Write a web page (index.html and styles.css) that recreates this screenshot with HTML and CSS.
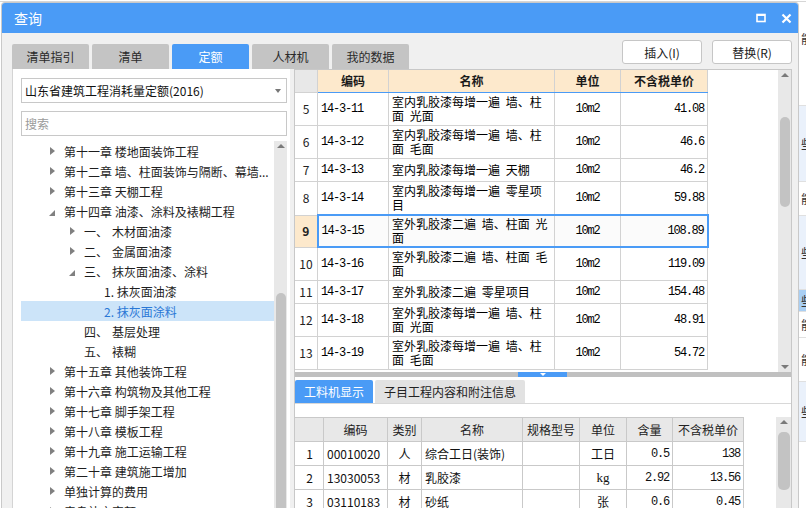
FILE: index.html
```html
<!DOCTYPE html>
<html lang="zh-CN">
<head>
<meta charset="utf-8">
<title>查询</title>
<link rel="stylesheet" href="styles.css">
</head>
<body>
<div class="desk">
  <div class="desk-strip">
    <div class="band b1">能</div>
    <div class="band b2">些</div>
    <div class="band b3">能</div>
    <div class="band b4">些</div>
    <div class="band b5">些</div>
    <div class="band b6">能</div>
    <div class="band b7">能</div>
    <div class="band b8">些</div>
  </div>
</div>

<div class="dialog">
  <div class="titlebar">
    <span class="title">查询</span>
    <div class="winbtns">
      <svg width="10" height="10" viewBox="0 0 10 10"><rect x="1" y="1.5" width="8" height="7" fill="none" stroke="#fff" stroke-width="1.6"/><rect x="1" y="1" width="8" height="2" fill="#fff"/></svg>
      <svg width="11" height="11" viewBox="0 0 11 11"><path d="M1.5 1.5 L9.5 9.5 M9.5 1.5 L1.5 9.5" stroke="#fff" stroke-width="2.2"/></svg>
    </div>
  </div>

  <div class="toolbar">
    <div class="tabs">
      <div class="tab">清单指引</div>
      <div class="tab">清单</div>
      <div class="tab active">定额</div>
      <div class="tab">人材机</div>
      <div class="tab">我的数据</div>
    </div>
    <div class="actions">
      <div class="btn">插入(I)</div>
      <div class="btn">替换(R)</div>
    </div>
  </div>

  <div class="body">
    <div class="left">
      <div class="select"><span>山东省建筑工程消耗量定额(2016)</span><i class="caret"></i></div>
      <div class="search">搜索</div>
      <div class="tree">
        <div class="tree-list">
          <div class="node l0"><i class="arr"><b class="tri-c"></b></i>第十一章 楼地面装饰工程</div>
          <div class="node l0"><i class="arr"><b class="tri-c"></b></i>第十二章 墙、柱面装饰与隔断、幕墙...</div>
          <div class="node l0"><i class="arr"><b class="tri-c"></b></i>第十三章 天棚工程</div>
          <div class="node l0"><i class="arr"><b class="tri-e"></b></i>第十四章 油漆、涂料及裱糊工程</div>
          <div class="node l1"><i class="arr"><b class="tri-c"></b></i><span class="no">一、</span>木材面油漆</div>
          <div class="node l1"><i class="arr"><b class="tri-c"></b></i><span class="no">二、</span>金属面油漆</div>
          <div class="node l1"><i class="arr"><b class="tri-e"></b></i><span class="no">三、</span>抹灰面油漆、涂料</div>
          <div class="node l2"><i class="arr"></i>1. 抹灰面油漆</div>
          <div class="node l2 sel"><i class="arr"></i>2. 抹灰面涂料</div>
          <div class="node l1"><i class="arr"></i><span class="no">四、</span>基层处理</div>
          <div class="node l1"><i class="arr"></i><span class="no">五、</span>裱糊</div>
          <div class="node l0"><i class="arr"><b class="tri-c"></b></i>第十五章 其他装饰工程</div>
          <div class="node l0"><i class="arr"><b class="tri-c"></b></i>第十六章 构筑物及其他工程</div>
          <div class="node l0"><i class="arr"><b class="tri-c"></b></i>第十七章 脚手架工程</div>
          <div class="node l0"><i class="arr"><b class="tri-c"></b></i>第十八章 模板工程</div>
          <div class="node l0"><i class="arr"><b class="tri-c"></b></i>第十九章 施工运输工程</div>
          <div class="node l0"><i class="arr"><b class="tri-c"></b></i>第二十章 建筑施工增加</div>
          <div class="node l0"><i class="arr"><b class="tri-c"></b></i>单独计算的费用</div>
          <div class="node l0"><i class="arr"><b class="tri-c"></b></i>青岛补充定额</div>
        </div>
        <div class="tree-scroll">
          <i class="up"></i>
          <div class="thumb tthumb"></div>
        </div>
      </div>
    </div>

    <div class="right">
      <div class="upper">
        <div class="table-area">
          <table class="grid">
            <colgroup><col class="c1"><col class="c2"><col class="c3"><col class="c4"><col class="c5"></colgroup>
            <thead>
              <tr><th class="corner"></th><th>编码</th><th>名称</th><th>单位</th><th>不含税单价</th></tr>
            </thead>
            <tbody>
              <tr><td class="rh">5</td><td class="mono">14-3-11</td><td class="nm">室内乳胶漆每增一遍 墙、柱面 光面</td><td class="mono c">10m2</td><td class="mono r">41.08</td></tr>
              <tr><td class="rh">6</td><td class="mono">14-3-12</td><td class="nm">室内乳胶漆每增一遍 墙、柱面 毛面</td><td class="mono c">10m2</td><td class="mono r">46.6</td></tr>
              <tr class="one"><td class="rh">7</td><td class="mono">14-3-13</td><td class="nm">室内乳胶漆每增一遍 天棚</td><td class="mono c">10m2</td><td class="mono r">46.2</td></tr>
              <tr><td class="rh">8</td><td class="mono">14-3-14</td><td class="nm">室内乳胶漆每增一遍 零星项目</td><td class="mono c">10m2</td><td class="mono r">59.88</td></tr>
              <tr class="sel"><td class="rh">9</td><td class="mono first">14-3-15</td><td class="nm">室外乳胶漆二遍 墙、柱面 光面</td><td class="mono c">10m2</td><td class="mono r last">108.89</td></tr>
              <tr><td class="rh">10</td><td class="mono">14-3-16</td><td class="nm">室外乳胶漆二遍 墙、柱面 毛面</td><td class="mono c">10m2</td><td class="mono r">119.09</td></tr>
              <tr class="one"><td class="rh">11</td><td class="mono">14-3-17</td><td class="nm">室外乳胶漆二遍 零星项目</td><td class="mono c">10m2</td><td class="mono r">154.48</td></tr>
              <tr><td class="rh">12</td><td class="mono">14-3-18</td><td class="nm">室外乳胶漆每增一遍 墙、柱面 光面</td><td class="mono c">10m2</td><td class="mono r">48.91</td></tr>
              <tr><td class="rh">13</td><td class="mono">14-3-19</td><td class="nm">室外乳胶漆每增一遍 墙、柱面 毛面</td><td class="mono c">10m2</td><td class="mono r">54.72</td></tr>
            </tbody>
          </table>
        </div>
        <div class="vscroll">
          <i class="up"></i>
          <div class="thumb uthumb"></div>
          <i class="down"></i>
        </div>
      </div>

      <div class="splitter"><span class="handle"><i class="hdown"></i></span></div>

      <div class="lower">
        <div class="ltabs">
          <div class="ltab active">工料机显示</div>
          <div class="ltab wide">子目工程内容和附注信息</div>
        </div>
        <div class="lower-body">
          <div class="ltable-area">
            <table class="lgrid">
              <colgroup><col class="d1"><col class="d2"><col class="d3"><col class="d4"><col class="d5"><col class="d6"><col class="d7"><col class="d8"></colgroup>
              <thead>
                <tr><th></th><th>编码</th><th>类别</th><th>名称</th><th>规格型号</th><th>单位</th><th>含量</th><th>不含税单价</th></tr>
              </thead>
              <tbody>
                <tr><td class="c">1</td><td>00010020</td><td class="c">人</td><td>综合工日(装饰)</td><td></td><td class="c">工日</td><td class="mono r">0.5</td><td class="mono r">138</td></tr>
                <tr><td class="c">2</td><td>13030053</td><td class="c">材</td><td>乳胶漆</td><td></td><td class="c serif">kg</td><td class="mono r">2.92</td><td class="mono r">13.56</td></tr>
                <tr><td class="c">3</td><td>03110183</td><td class="c">材</td><td>砂纸</td><td></td><td class="c">张</td><td class="mono r">0.6</td><td class="mono r">0.45</td></tr>
              </tbody>
            </table>
          </div>
          <div class="lscroll">
            <i class="up"></i>
            <div class="thumb lthumb"></div>
          </div>
        </div>
      </div>
    </div>
  </div>
</div>
</body>
</html>
```

FILE: styles.css
```css
* { box-sizing: border-box; }

html, body {
  margin: 0;
  padding: 0;
}

body {
  width: 806px;
  height: 508px;
  overflow: hidden;
  position: relative;
  background: #ffffff;
  font-family: "Noto Sans CJK SC", "Noto Sans", sans-serif;
  font-size: 12px;
  color: #222;
}

/* background application behind the dialog */
.desk {
  position: absolute;
  inset: 0;
  background:
    linear-gradient(#d6d6d6, #d6d6d6) 0 1px / 806px 1px no-repeat,
    #fff;
}

.desk-strip {
  position: absolute;
  left: 798px;
  top: 0;
  width: 8px;
  height: 508px;
  display: flex;
  flex-direction: column;
  font-size: 12px;
  color: #333;
  overflow: hidden;
}

.band {
  display: flex;
  align-items: center;
  padding-left: 3px;
  border-bottom: 1px solid #e0e0e0;
  white-space: nowrap;
}
.b1 { height: 106px; padding-top: 30px; align-items: flex-start; }
.b2 { height: 76px; background: #eaf1fb; }
.b3 { height: 34px; }
.b4 { height: 74px; background: #eaf1fb; }
.b5 { height: 22px; background: #a9cff4; }
.b6 { height: 26px; }
.b7 { height: 44px; }
.b8 { height: 60px; background: #eaf1fb; }

/* dialog window */
.dialog {
  position: absolute;
  left: 2px;
  top: 3px;
  width: 796px;
  height: 520px;
  background: #f0f0f0;
  border-radius: 3px 3px 0 0;
  box-shadow: 0 0 0 1px #c9c9c9;
  display: flex;
  flex-direction: column;
}

.titlebar {
  height: 30px;
  flex: none;
  background: #4a9bf6;
  border-radius: 3px 3px 0 0;
  display: flex;
  align-items: center;
  padding: 0 6px 0 12px;
  color: #fff;
  font-size: 14px;
}

.title { flex: 1; }

.winbtns {
  display: flex;
  align-items: center;
  gap: 15px;
}

.toolbar {
  height: 36px;
  flex: none;
  display: flex;
  justify-content: space-between;
  padding: 0 6px 0 10px;
}

.tabs {
  display: flex;
  gap: 3px;
  align-self: flex-end;
}

.tab {
  width: 77px;
  height: 25px;
  background: #c4c4c4;
  color: #2a2a2a;
  display: flex;
  align-items: center;
  justify-content: center;
  border-radius: 2px 2px 0 0;
}

.tab.active {
  background: #4a9bf6;
  color: #fff;
}

.actions {
  display: flex;
  gap: 10px;
  margin-top: 7px;
  align-self: flex-start;
}

.btn {
  width: 80px;
  height: 24px;
  background: #fff;
  border: 1px solid #c6c6c6;
  border-radius: 3px;
  display: flex;
  align-items: center;
  justify-content: center;
  color: #222;
}

.body {
  flex: 1;
  min-height: 0;
  display: flex;
  gap: 4px;
  padding: 0 6px 0 10px;
}

/* left panel */
.left {
  width: 278px;
  flex: none;
  background: #fff;
  border-left: 1px solid #d4d4d4;
  padding: 9px 3px 0 8px;
  display: flex;
  flex-direction: column;
}

.select {
  height: 25px;
  flex: none;
  border: 1px solid #c8c8c8;
  display: flex;
  align-items: center;
  justify-content: space-between;
  padding: 0 5px 0 3px;
  color: #111;
}

.caret {
  width: 0;
  height: 0;
  border-left: 3px solid transparent;
  border-right: 3px solid transparent;
  border-top: 4px solid #777;
}

.search {
  height: 25px;
  flex: none;
  margin-top: 8px;
  border: 1px solid #c8c8c8;
  display: flex;
  align-items: center;
  padding-left: 3px;
  color: #9a9a9a;
}

.tree {
  flex: 1;
  min-height: 0;
  display: flex;
  margin-top: 5px;
}

.tree-list {
  flex: 1;
  overflow: hidden;
}

.node {
  height: 20px;
  display: flex;
  align-items: center;
  white-space: nowrap;
  color: #1e1e1e;
}

.node.l0 { padding-left: 28px; }
.node.l1 { padding-left: 48px; }
.node.l2 { padding-left: 68px; }

.node.sel {
  background: #cce4f9;
  color: #2a78d6;
}

.arr {
  width: 15px;
  height: 20px;
  flex: none;
  display: flex;
  align-items: center;
}

.tri-c {
  width: 0;
  height: 0;
  margin-left: 1px;
  border-top: 4px solid transparent;
  border-bottom: 4px solid transparent;
  border-left: 5px solid #808080;
}

.tri-e {
  width: 0;
  height: 0;
  margin-top: 3px;
  border-left: 6px solid transparent;
  border-bottom: 6px solid #808080;
}

.no { margin-right: 4px; }

.tree-scroll {
  width: 13px;
  flex: none;
  background: #e8e8e8;
  position: relative;
}

.up, .down {
  position: absolute;
  left: 50%;
  margin-left: -4px;
  width: 0;
  height: 0;
  border-left: 4px solid transparent;
  border-right: 4px solid transparent;
}

.up {
  top: 3px;
  border-bottom: 4px solid #7a7a7a;
}

.down {
  bottom: 3px;
  border-top: 4px solid #7a7a7a;
}

.thumb {
  position: absolute;
  left: 2px;
  right: 1px;
  background: #c3c3c3;
  border-radius: 5px;
}

.tthumb { top: 152px; height: 260px; }

/* right panel */
.right {
  width: 498px;
  flex: none;
  background: #fff;
  border: 1px solid #c8c8c8;
  display: flex;
  flex-direction: column;
}

.upper {
  height: 302px;
  flex: none;
  display: flex;
}

.table-area {
  flex: 1;
  overflow: hidden;
}

.grid {
  border-collapse: collapse;
  table-layout: fixed;
  margin: -1px 0 0 -1px;
  width: 413px;
  color: #000;
}

.grid .c1 { width: 23px; }
.grid .c2 { width: 71px; }
.grid .c3 { width: 166px; }
.grid .c4 { width: 66px; }
.grid .c5 { width: 87px; }

.grid th, .grid td {
  border: 1px solid #d2d2d2;
  padding: 2px 3px;
  line-height: 14px;
  vertical-align: middle;
  text-align: left;
  overflow: hidden;
}

.grid td.nm {
  word-spacing: 3px;
  padding-right: 5px;
}

.grid thead tr { height: 23px; }

.grid th {
  background: #fde9cc;
  font-weight: bold;
  text-align: center;
  border-bottom: 1px solid #4a9bf6;
  color: #1a1a1a;
  padding-top: 0;
  padding-bottom: 0;
}

.grid th.corner {
  background: #e8e8e8;
  border-bottom-color: #d2d2d2;
}

.grid tr.one { height: 23px; }

.grid td.rh {
  text-align: center;
  padding: 0;
  color: #222;
}

.mono {
  font-family: "Liberation Mono", "DejaVu Sans Mono", monospace;
  font-size: 12px;
  letter-spacing: -1.2px;
}

.c { text-align: center !important; }
.r { text-align: right !important; }

.grid tr.sel td {
  border-top: 2px solid #4a9bf6;
  border-bottom: 2px solid #4a9bf6;
  background: #fbfbfb;
  padding-top: 1px;
  padding-bottom: 1px;
}

.grid tr.sel td.first { border-left: 2px solid #4a9bf6; }
.grid tr.sel td.last { border-right: 2px solid #4a9bf6; }

.grid tr.sel td.rh {
  background: #fde9cc;
  font-weight: bold;
  border-top: 1px solid #d2d2d2;
  border-bottom: 1px solid #d2d2d2;
}

.vscroll {
  width: 13px;
  flex: none;
  background: #e8e8e8;
  position: relative;
}

.uthumb { top: 47px; height: 90px; }

.splitter {
  height: 5px;
  flex: none;
  background: #c0c0c0;
  position: relative;
}

.handle {
  position: absolute;
  left: 223px;
  width: 49px;
  top: 0;
  bottom: 0;
  background: #4a9bf6;
  display: flex;
  justify-content: center;
  align-items: center;
}

.hdown {
  width: 0;
  height: 0;
  border-left: 3px solid transparent;
  border-right: 3px solid transparent;
  border-top: 3px solid #fff;
}

.lower {
  flex: 1;
  min-height: 0;
  display: flex;
  flex-direction: column;
}

.ltabs {
  height: 27px;
  flex: none;
  display: flex;
  gap: 2px;
  padding-top: 3px;
  border-bottom: 1px solid #d8d8d8;
}

.ltab {
  width: 78px;
  height: 23px;
  background: #e2e2e2;
  color: #222;
  display: flex;
  align-items: center;
  justify-content: center;
  border-radius: 2px 2px 0 0;
}

.ltab.wide { width: 150px; }

.ltab.active {
  background: #4a9bf6;
  color: #fff;
}

.lower-body {
  flex: 1;
  min-height: 0;
  display: flex;
  padding-top: 13px;
}

.ltable-area {
  flex: 1;
  overflow: hidden;
}

.lgrid {
  border-collapse: collapse;
  table-layout: fixed;
  width: 448px;
  color: #111;
}

.lgrid .d1 { width: 28px; }
.lgrid .d2 { width: 64px; }
.lgrid .d3 { width: 34px; }
.lgrid .d4 { width: 101px; }
.lgrid .d5 { width: 57px; }
.lgrid .d6 { width: 47px; }
.lgrid .d7 { width: 46px; }
.lgrid .d8 { width: 71px; }

.lgrid th, .lgrid td {
  border: 1px solid #c9c9c9;
  height: 24px;
  padding: 0 3px;
  white-space: nowrap;
  overflow: hidden;
  text-align: left;
}

.lgrid th {
  background: #e8e8e8;
  font-weight: normal;
  text-align: center;
  color: #222;
}

.lgrid td:first-child { border-left-color: #fff; }
.lgrid th:first-child { border-left-color: #e8e8e8; }

.serif {
  font-family: "Liberation Serif", serif;
  font-size: 13px;
}

.lscroll {
  width: 15px;
  flex: none;
  background: #e8e8e8;
  position: relative;
}

.lthumb { top: 15px; height: 58px; }
```
